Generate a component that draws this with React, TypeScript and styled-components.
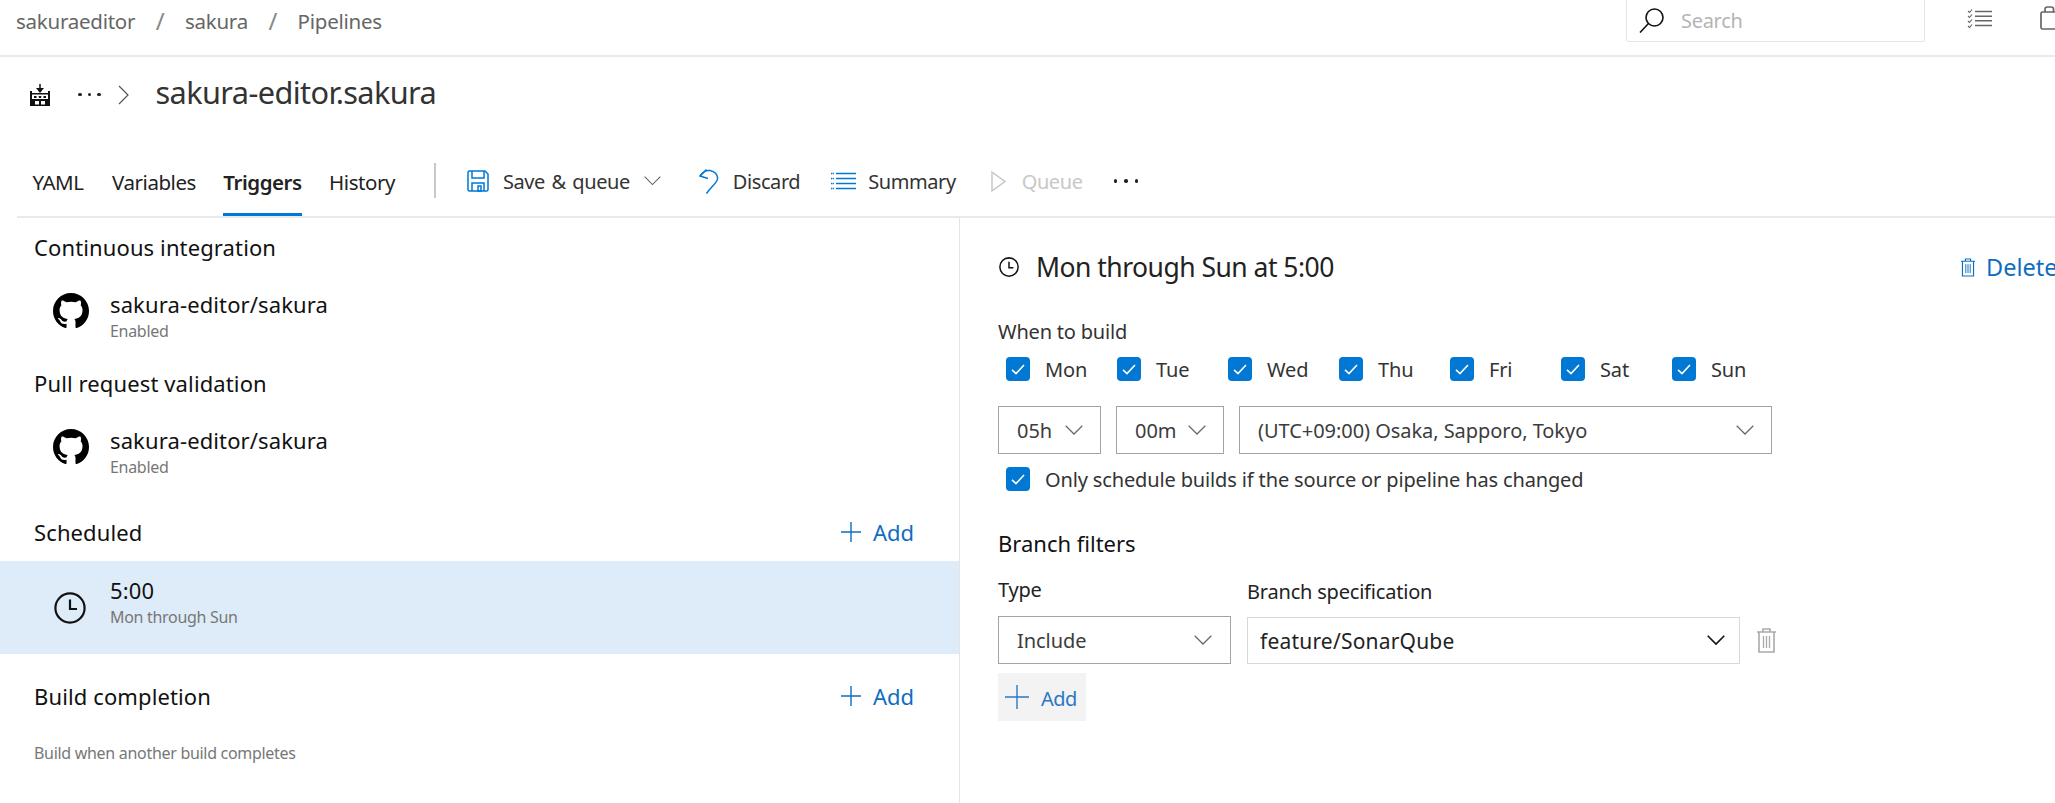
import React from "react";
import styled, { createGlobalStyle } from "styled-components";

const Global = createGlobalStyle`
  html, body { margin: 0; padding: 0; background: #fff; overflow: hidden; }
  body { font-family: "Noto Sans", "Open Sans", Arial, sans-serif; color: #111; }
  * { box-sizing: border-box; }
`;

const Page = styled.div`
  width: 2055px;
  height: 803px;
  overflow: hidden;
  display: flex;
  flex-direction: column;
`;

const Header = styled.header`
  flex: none;
  height: 57px;
  border-bottom: 2px solid #eaeaea;
  display: flex;
  align-items: flex-start;
  padding-left: 16px;
  overflow: hidden;
`;

const Breadcrumbs = styled.nav`
  flex: none;
  height: 41px;
  display: flex;
  align-items: center;
  font-size: 20.5px;
  letter-spacing: -0.25px;
  color: #666;
  width: 1610px;
`;

const Slash = styled.span`
  font-size: 24px;
  color: #888;
  margin: 0 20.5px;
`;

const SearchBox = styled.div`
  flex: none;
  width: 299px;
  height: 42px;
  border: 1px solid #e4e4e4;
  border-top: none;
  border-radius: 0 0 3px 3px;
  display: flex;
  align-items: center;
  padding-left: 12px;
  gap: 17px;
  font-size: 20px;
  letter-spacing: -0.3px;
  color: #b4b4b4;
`;

const HeaderIcons = styled.div`
  flex: none;
  display: flex;
  align-items: flex-start;
  margin-left: 42px;
  gap: 48px;
  padding-top: 6px;
`;

const TitleRow = styled.div`
  flex: none;
  height: 75px;
  display: flex;
  align-items: center;
  padding-left: 30px;
`;

const Dots = styled.span<{ $ml: number; $gap: number }>`
  display: flex;
  gap: ${(p) => p.$gap}px;
  margin-left: ${(p) => p.$ml}px;
  i { width: 3.5px; height: 3.5px; border-radius: 50%; background: #222; display: block; }
`;

const Title = styled.h1`
  margin: 0 0 6px 27px;
  font-size: 30.7px;
  font-weight: 400;
  letter-spacing: -0.6px;
  color: #333;
`;

const Toolbar = styled.div`
  flex: none;
  height: 86px;
  margin-left: 17px;
  border-bottom: 2px solid #eaeaea;
  display: flex;
  align-items: stretch;
  padding-top: 31px;
`;

const Tab = styled.div<{ $active?: boolean; $w: number; $ml?: number }>`
  width: ${(p) => p.$w}px;
  height: 53px;
  margin-left: ${(p) => p.$ml ?? 0}px;
  padding: 0 0 12px;
  display: flex;
  align-items: center;
  justify-content: center;
  font-size: 20.5px;
  letter-spacing: -0.45px;
  font-weight: ${(p) => (p.$active ? 600 : 400)};
  color: #222;
  border-bottom: 3px solid ${(p) => (p.$active ? "#0078d4" : "transparent")};
`;

const Divider = styled.div`
  width: 2px;
  height: 35px;
  background: #c8c8c8;
  margin: 0 31px 0 12px;
`;

const Action = styled.div<{ $disabled?: boolean; $gap: number; $ml?: number }>`
  height: 36px;
  display: flex;
  align-items: center;
  gap: ${(p) => p.$gap}px;
  margin-left: ${(p) => p.$ml ?? 0}px;
  font-size: 20px;
  letter-spacing: -0.42px;
  word-spacing: 1.8px;
  color: ${(p) => (p.$disabled ? "#c8c8c8" : "#333")};
`;

const Body = styled.main`
  flex: 1;
  display: flex;
  min-height: 0;
`;

const Left = styled.section`
  flex: none;
  width: 960px;
  border-right: 1px solid #e4e4e4;
  padding-top: 15px;
`;

const Heading = styled.div<{ $mt?: number }>`
  height: 30px;
  margin-top: ${(p) => p.$mt ?? 0}px;
  padding: 0 45px 2px 34px;
  display: flex;
  align-items: center;
  justify-content: space-between;
  font-size: 22px;
  letter-spacing: 0.12px;
  color: #111;
`;

const AddLink = styled.span`
  display: flex;
  align-items: center;
  gap: 12px;
  color: #106ebe;
  font-size: 22px;
  letter-spacing: 0;
`;

const Row = styled.div<{ $selected?: boolean }>`
  height: ${(p) => (p.$selected ? 93 : 106)}px;
  margin-top: ${(p) => (p.$selected ? 13 : 0)}px;
  padding: ${(p) => (p.$selected ? "16px 0 0 54px" : "28px 0 0 53px")};
  background: ${(p) => (p.$selected ? "#deecf9" : "transparent")};
  display: flex;
  align-items: flex-start;
  gap: ${(p) => (p.$selected ? 24 : 21)}px;
`;

const RowIcon = styled.div<{ $mt: number }>`
  margin-top: ${(p) => p.$mt}px;
  flex: none;
  display: flex;
`;

const RowName = styled.div`
  height: 28px;
  line-height: 26px;
  font-size: 22px;
  letter-spacing: 0.12px;
  color: #111;
`;

const RowSub = styled.div`
  height: 26px;
  line-height: 25px;
  font-size: 16px;
  letter-spacing: -0.3px;
  color: #777;
`;

const Hint = styled.div`
  margin: 28px 0 0 34px;
  height: 26px;
  line-height: 26px;
  font-size: 16px;
  letter-spacing: -0.3px;
  color: #777;
`;

const Right = styled.section`
  flex: 1;
  min-width: 0;
  padding: 32px 0 0 38px;
`;

const DetailHead = styled.div`
  height: 34px;
  padding-left: 1px;
  display: flex;
  align-items: center;
  svg { flex: none; }
`;

const DetailTitle = styled.h2`
  flex: none;
  margin: 0 0 0 17px;
  width: 925px;
  font-size: 26.5px;
  font-weight: 400;
  letter-spacing: -0.52px;
  color: #222;
`;

const DeleteLink = styled.span`
  flex: none;
  display: flex;
  align-items: center;
  gap: 11px;
  color: #106ebe;
  font-size: 23.5px;
  letter-spacing: 0;
  white-space: nowrap;
`;

const FieldLabel = styled.div<{ $mt?: number; $size?: number; $color?: string }>`
  height: 28px;
  line-height: ${(p) => (p.$size ? 25 : 28)}px;
  margin-top: ${(p) => p.$mt ?? 0}px;
  font-size: ${(p) => p.$size ?? 20}px;
  letter-spacing: ${(p) => (p.$size ? 0 : -0.2)}px;
  color: ${(p) => p.$color ?? "#333"};
`;

const Days = styled.div`
  margin-top: 11px;
  padding-left: 8px;
  display: grid;
  grid-template-columns: repeat(7, 111px);
`;

const CheckLine = styled.label<{ $mt?: number; $pl?: number }>`
  display: flex;
  align-items: center;
  gap: 15px;
  height: 24px;
  margin-top: ${(p) => p.$mt ?? 0}px;
  padding-left: ${(p) => p.$pl ?? 0}px;
  font-size: 20px;
  letter-spacing: -0.14px;
  color: #333;
`;

const Box = styled.span`
  flex: none;
  width: 24px;
  height: 24px;
  border-radius: 4px;
  background: #0078d4;
  display: flex;
  align-items: center;
  justify-content: center;
`;

const Selects = styled.div`
  margin-top: 25px;
  display: flex;
  gap: 15px;
`;

const Select = styled.div<{ $w: number; $h?: number; $pale?: boolean; $pad?: number }>`
  flex: none;
  width: ${(p) => p.$w}px;
  height: ${(p) => p.$h ?? 48}px;
  border: 1.6px solid ${(p) => (p.$pale ? "#d8d8d8" : "#a3a3a3")};
  display: flex;
  align-items: center;
  justify-content: space-between;
  padding: 0 ${(p) => p.$pad ?? 17}px 0 ${(p) => (p.$pale ? 12 : 18)}px;
  font-size: ${(p) => (p.$pale ? 21 : 20)}px;
  letter-spacing: ${(p) => (p.$pale ? 0.2 : -0.05)}px;
  color: ${(p) => (p.$pale ? "#222" : "#3c3c3c")};
`;

const Filters = styled.div`
  margin-top: 17px;
  display: flex;
  gap: 16px;
  align-items: flex-start;
`;

const FilterCol = styled.div<{ $pt?: number }>`
  padding-top: ${(p) => p.$pt ?? 0}px;
  display: flex;
  flex-direction: column;
`;

const TypeSelect = styled(Select)`
  margin-top: 12px;
`;

const BranchLine = styled.div`
  margin-top: 11px;
  display: flex;
  align-items: center;
  gap: 17px;
`;

const AddButton = styled.div`
  margin-top: 9px;
  width: 88px;
  height: 48px;
  background: #f3f3f3;
  display: flex;
  align-items: center;
  padding-left: 7px;
  gap: 12px;
  color: #2b78c5;
  font-size: 20px;
  letter-spacing: -0.5px;
`;

const AddLabel = styled.span`
  padding-top: 3px;
`;

const TitleChevron = styled.svg`
  margin-left: 17px;
  flex: none;
`;

const ListGlyph = styled.svg`
  margin-top: 3px;
`;

const Chevron = ({ w = 18, color = "#666", sw = 1.2 }: { w?: number; color?: string; sw?: number }) => (
  <svg width={w} height={w * 0.56} viewBox="0 0 18 10" fill="none">
    <path d="M0.7 0.7 L9 9 L17.3 0.7" stroke={color} strokeWidth={sw} />
  </svg>
);

const Check = () => (
  <svg width="14" height="11" viewBox="0 0 14 11" fill="none">
    <path d="M1 5.8 L5 9.6 L13 1" stroke="#fff" strokeWidth="1.6" />
  </svg>
);

const Plus = ({ s, color }: { s: number; color: string }) => (
  <svg width={s} height={s} viewBox="0 0 24 24" fill="none">
    <path d="M12 0V24M0 12H24" stroke={color} strokeWidth={(24 / s) * 1.4} />
  </svg>
);

const Github = () => (
  <svg width="36" height="36" viewBox="0 0 16 16">
    <path
      fillRule="evenodd"
      fill="#000"
      d="M8 0C3.58 0 0 3.58 0 8c0 3.54 2.29 6.53 5.47 7.59.4.07.55-.17.55-.38 0-.19-.01-.82-.01-1.49-2.01.37-2.53-.49-2.69-.94-.09-.23-.48-.94-.82-1.13-.28-.15-.68-.52-.01-.53.63-.01 1.08.58 1.23.82.72 1.21 1.87.87 2.33.66.07-.52.28-.87.51-1.07-1.78-.2-3.64-.89-3.64-3.95 0-.87.31-1.59.82-2.15-.08-.2-.36-1.02.08-2.12 0 0 .67-.21 2.2.82.64-.18 1.32-.27 2-.27.68 0 1.36.09 2 .27 1.53-1.04 2.2-.82 2.2-.82.44 1.1.16 1.92.08 2.12.51.56.82 1.27.82 2.15 0 3.07-1.87 3.75-3.65 3.95.29.25.54.73.54 1.48 0 1.07-.01 1.93-.01 2.2 0 .21.15.46.55.38A8.013 8.013 0 0016 8c0-4.42-3.58-8-8-8z"
    />
  </svg>
);

const Clock = ({ s, sw }: { s: number; sw: number }) => (
  <svg width={s} height={s} viewBox="0 0 32 32" fill="none" stroke="#111" strokeWidth={sw}>
    <circle cx="16" cy="16" r="14.6" />
    <path d="M16 7.5V17H23" />
  </svg>
);

const Trash = ({ w, h, color }: { w: number; h: number; color: string }) => (
  <svg width={w} height={h} viewBox="0 0 19 25" fill="none" stroke={color} strokeWidth="1.6">
    <path d="M0 4H19M6 4V1H13V4M2 4V24H17V4" />
    <path d="M6.5 8V20M9.5 8V20M12.5 8V20" strokeWidth="1.3" />
  </svg>
);

const Factory = () => (
  <svg width="20" height="22" viewBox="0 0 20 22">
    <path d="M10 0V6" stroke="#111" strokeWidth="1.5" />
    <path d="M6 4L10 9L14 4Z" fill="#111" />
    <path
      fillRule="evenodd"
      fill="#111"
      d="M0 7H2V9H18V7H20V22H0ZM2 10.5V15H18V10.5ZM5 17V20.5H9V17ZM11 17V20.5H15V17Z"
    />
    <path d="M4 12H6.5V14H4ZM8.8 12H11.2V14H8.8ZM13.5 12H16V14H13.5Z" fill="#111" />
  </svg>
);

const SaveIcon = () => (
  <svg width="22" height="22" viewBox="0 0 22 22" fill="none" stroke="#0078d4" strokeWidth="1.5">
    <path d="M1 2.5C1 1.5 1.5 1 2.5 1H18L21 4V19.5C21 20.5 20.5 21 19.5 21H2.5C1.5 21 1 20.5 1 19.5Z" />
    <path d="M5 1V8H17V1M5 21V13H17V21M11 16V21H14V16Z" />
  </svg>
);

const UndoIcon = () => (
  <svg width="20" height="25" viewBox="0 0 20 25" fill="none" stroke="#0078d4" strokeWidth="1.5">
    <path d="M1 7C4 2.5 8 1 11 1.5C16 2.3 19 6 18.5 10C18 14 12 18 7.5 24.5" />
    <path d="M7.5 0.5L1 7L9 9.5" />
  </svg>
);

const SummaryIcon = () => (
  <svg width="25" height="18" viewBox="0 0 25 18" fill="none" stroke="#0078d4" strokeWidth="1.7">
    <path d="M5 1.5H25M5 6.5H25M5 11.5H25M5 16.5H25" />
    <path d="M0 1.5H3M0 6.5H3M0 11.5H3M0 16.5H3" strokeDasharray="1.5 0.6" />
  </svg>
);

const PlayIcon = () => (
  <svg width="15" height="21" viewBox="0 0 15 21" fill="none" stroke="#c8c8c8" strokeWidth="1.5">
    <path d="M1 1.2V19.8L14 10.5Z" />
  </svg>
);

const SearchIcon = () => (
  <svg width="25" height="25" viewBox="0 0 25 25" fill="none" stroke="#111" strokeWidth="1.6">
    <circle cx="15.5" cy="9.5" r="8.5" />
    <path d="M9.5 15.5L1 24.5" />
  </svg>
);

const ListIcon = () => (
  <ListGlyph width="25" height="19" viewBox="0 0 25 19" fill="none" stroke="#666" strokeWidth="1.6">
    <path d="M8 2.5H25M8 7.2H25M8 11.8H25M8 16.5H25" />
    <path d="M1 2L2.5 3.5L5 0.5M1 7L2.5 8.5L5 5.5M1 12L2.5 13.5L5 10.5M1 17L2.5 18.5L5 15.5" strokeWidth="1.1" />
  </ListGlyph>
);

const BagIcon = () => (
  <svg width="28" height="24" viewBox="0 0 28 24" fill="none" stroke="#666" strokeWidth="1.7">
    <rect x="1" y="6" width="26" height="17" rx="1.5" />
    <path d="M5 6V3C5 1.6 6 1 7.5 1H11C12.5 1 13.5 1.6 13.5 3V6" />
  </svg>
);

const DotsRow = ({ ml, gap }: { ml: number; gap: number }) => (
  <Dots $ml={ml} $gap={gap}>
    <i />
    <i />
    <i />
  </Dots>
);

const days = ["Mon", "Tue", "Wed", "Thu", "Fri", "Sat", "Sun"];

export default function App() {
  return (
    <Page>
      <Global />
      <Header>
        <Breadcrumbs>
          <span>sakuraeditor</span>
          <Slash>/</Slash>
          <span>sakura</span>
          <Slash>/</Slash>
          <span>Pipelines</span>
        </Breadcrumbs>
        <SearchBox>
          <SearchIcon />
          <span>Search</span>
        </SearchBox>
        <HeaderIcons>
          <ListIcon />
          <BagIcon />
        </HeaderIcons>
      </Header>

      <TitleRow>
        <Factory />
        <DotsRow ml={28} gap={6} />
        <TitleChevron width="11" height="20" viewBox="0 0 11 20" fill="none">
          <path d="M1 1L10 10L1 19" stroke="#555" strokeWidth="1.2" />
        </TitleChevron>
        <Title>sakura-editor.sakura</Title>
      </TitleRow>

      <Toolbar>
        <Tab $w={82}>YAML</Tab>
        <Tab $w={110}>Variables</Tab>
        <Tab $w={79} $ml={14} $active>Triggers</Tab>
        <Tab $w={120}>History</Tab>
        <Divider />
        <Action $gap={14}>
          <SaveIcon />
          <span>Save &amp; queue</span>
          <Chevron w={17} />
        </Action>
        <Action $gap={14} $ml={38}>
          <UndoIcon />
          <span>Discard</span>
        </Action>
        <Action $gap={12} $ml={31}>
          <SummaryIcon />
          <span>Summary</span>
        </Action>
        <Action $gap={16} $ml={35} $disabled>
          <PlayIcon />
          <span>Queue</span>
        </Action>
        <Action $gap={0} $ml={31}>
          <DotsRow ml={0} gap={7} />
        </Action>
      </Toolbar>

      <Body>
        <Left>
          <Heading>Continuous integration</Heading>
          <Row>
            <RowIcon $mt={2}><Github /></RowIcon>
            <div>
              <RowName>sakura-editor/sakura</RowName>
              <RowSub>Enabled</RowSub>
            </div>
          </Row>
          <Heading>Pull request validation</Heading>
          <Row>
            <RowIcon $mt={2}><Github /></RowIcon>
            <div>
              <RowName>sakura-editor/sakura</RowName>
              <RowSub>Enabled</RowSub>
            </div>
          </Row>
          <Heading $mt={13}>
            <span>Scheduled</span>
            <AddLink><Plus s={20} color="#106ebe" />Add</AddLink>
          </Heading>
          <Row $selected>
            <RowIcon $mt={15}><Clock s={32} sw={2.2} /></RowIcon>
            <div>
              <RowName>5:00</RowName>
              <RowSub>Mon through Sun</RowSub>
            </div>
          </Row>
          <Heading $mt={28}>
            <span>Build completion</span>
            <AddLink><Plus s={20} color="#106ebe" />Add</AddLink>
          </Heading>
          <Hint>Build when another build completes</Hint>
        </Left>

        <Right>
          <DetailHead>
            <Clock s={20} sw={2.4} />
            <DetailTitle>Mon through Sun at 5:00</DetailTitle>
            <DeleteLink><Trash w={14} h={19} color="#106ebe" />Delete</DeleteLink>
          </DetailHead>

          <FieldLabel $mt={34}>When to build</FieldLabel>
          <Days>
            {days.map((d) => (
              <CheckLine key={d}>
                <Box><Check /></Box>
                {d}
              </CheckLine>
            ))}
          </Days>

          <Selects>
            <Select $w={103}>05h<Chevron /></Select>
            <Select $w={108}>00m<Chevron /></Select>
            <Select $w={533}>(UTC+09:00) Osaka, Sapporo, Tokyo<Chevron /></Select>
          </Selects>

          <CheckLine $mt={13} $pl={8}>
            <Box><Check /></Box>
            Only schedule builds if the source or pipeline has changed
          </CheckLine>

          <FieldLabel $mt={40} $size={22} $color="#111">Branch filters</FieldLabel>

          <Filters>
            <FilterCol>
              <FieldLabel $color="#222">Type</FieldLabel>
              <TypeSelect $w={233} $pad={18}>Include<Chevron /></TypeSelect>
            </FilterCol>
            <FilterCol $pt={2}>
              <FieldLabel $color="#222">Branch specification</FieldLabel>
              <BranchLine>
                <Select $w={493} $h={47} $pale $pad={14}>
                  feature/SonarQube
                  <Chevron color="#111" sw={1.6} />
                </Select>
                <Trash w={19} h={25} color="#aaa" />
              </BranchLine>
            </FilterCol>
          </Filters>

          <AddButton>
            <Plus s={24} color="#2b78c5" />
            <AddLabel>Add</AddLabel>
          </AddButton>
        </Right>
      </Body>
    </Page>
  );
}
